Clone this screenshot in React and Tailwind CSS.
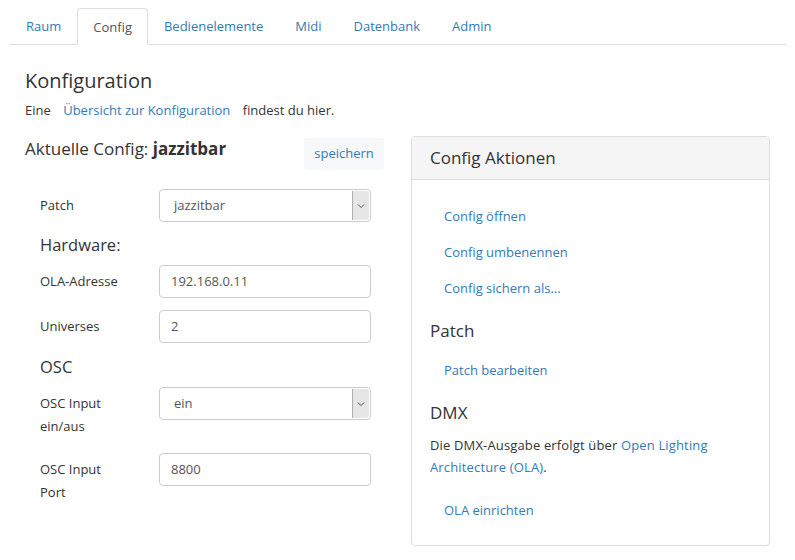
import React from "react";

const tabs = ["Raum", "Config", "Bedienelemente", "Midi", "Datenbank", "Admin"];

function Chevron() {
  return (
    <svg width="8" height="6" viewBox="0 0 8 6" fill="none">
      <path d="M1 1.5l3 3 3-3" stroke="#555" strokeWidth="1" />
    </svg>
  );
}

function SelectBox({ value }) {
  return (
    <div className="flex w-[212px] h-[33px] border border-[#ccc] rounded-[4px] bg-white overflow-hidden shrink-0">
      <div className="flex-1 flex items-center pl-[14px] text-[13px] text-[#555]">{value}</div>
      <div className="w-[17px] my-[1px] mr-[1px] bg-[#e6e6e6] border-l border-[#adadad] rounded-r-[3px] flex items-center justify-center">
        <Chevron />
      </div>
    </div>
  );
}

function TextBox({ value }) {
  return (
    <div className="flex items-center w-[212px] h-[33px] border border-[#ccc] rounded-[4px] bg-white pl-[11px] text-[13px] text-[#555] shrink-0">
      {value}
    </div>
  );
}

export default function App() {
  return (
    <div className="w-[795px] h-[560px] bg-white text-[#333] font-['Open_Sans',sans-serif] text-[13px] overflow-hidden">
      {/* Tabs */}
      <div className="pt-[8px] px-[10px]">
        <div className="flex border-b border-[#ddd] w-[776px]">
          {tabs.map((t) => (
            <div
              key={t}
              className={
                t === "Config"
                  ? "px-[15px] pt-[2px] h-[37px] flex items-center -mb-px border border-[#ddd] border-b-white rounded-t-[4px] bg-white text-[#555] text-[13px]"
                  : "px-[15px] pt-[2px] h-[36px] flex items-center border border-transparent text-[#337ab7] text-[13px]"
              }
            >
              {t}
            </div>
          ))}
        </div>
      </div>

      <div className="px-[25px]">
        <h1 className="text-[20px] leading-none mt-[26px] text-[#333]">Konfiguration</h1>
        <p className="mt-[9px] text-[13px] leading-[20px]">
          Eine <span className="text-[#337ab7] px-[9px]">Übersicht zur Konfiguration</span> findest du hier.
        </p>

        <div className="flex gap-[27px] mt-[16px]">
          {/* Left column */}
          <div className="w-[360px]">
            <div className="flex items-start justify-between">
              <div className="text-[17px] leading-[26px]">
                Aktuelle Config: <b>jazzitbar</b>
              </div>
              <div className="w-[80px] h-[32px] mt-[2px] bg-[#f6f8fa] rounded-[3px] flex items-center justify-center text-[#337ab7] text-[13px]">
                speichern
              </div>
            </div>

            <div className="pl-[15px] mt-[19px]">
              <div className="flex items-center">
                <div className="w-[119px]">Patch</div>
                <SelectBox value="jazzitbar" />
              </div>
              <div className="text-[16.5px] mt-[10px] leading-[26px]">Hardware:</div>
              <div className="flex items-center mt-[7px]">
                <div className="w-[119px]">OLA-Adresse</div>
                <TextBox value="192.168.0.11" />
              </div>
              <div className="flex items-center mt-[12px]">
                <div className="w-[119px]">Universes</div>
                <TextBox value="2" />
              </div>
              <div className="text-[16.5px] mt-[11px] leading-[26px]">OSC</div>
              <div className="flex items-start mt-[7px]">
                <div className="w-[119px] leading-[23px] pt-[5px]">
                  OSC Input
                  <br />
                  ein/aus
                </div>
                <SelectBox value="ein" />
              </div>
              <div className="flex items-start mt-[15px]">
                <div className="w-[119px] leading-[23px] pt-[5px]">
                  OSC Input
                  <br />
                  Port
                </div>
                <TextBox value="8800" />
              </div>
            </div>
          </div>

          {/* Right card */}
          <div className="w-[360px] h-[410px] border border-[#ddd] rounded-[4px] overflow-hidden">
            <div className="h-[43px] bg-[#f5f5f5] border-b border-[#ddd] flex items-center px-[18px] text-[17px]">
              Config Aktionen
            </div>
            <div className="px-[18px]">
              <div className="pl-[14px] pt-[26px] flex flex-col gap-[16px] text-[#337ab7] leading-[20px]">
                <div>Config öffnen</div>
                <div>Config umbenennen</div>
                <div>Config sichern als...</div>
              </div>
              <div className="text-[17px] mt-[21px] leading-[24px]">Patch</div>
              <div className="pl-[14px] mt-[17px] text-[#337ab7] leading-[20px]">Patch bearbeiten</div>
              <div className="text-[17px] mt-[21px] leading-[24px]">DMX</div>
              <div className="mt-[9px] leading-[22px] tracking-[0.15px]">
                <div>
                  Die DMX-Ausgabe erfolgt über <span className="text-[#337ab7]">Open Lighting</span>
                </div>
                <div>
                  <span className="text-[#337ab7]">Architecture (OLA)</span>.
                </div>
              </div>
              <div className="pl-[14px] mt-[22px] text-[#337ab7] leading-[20px]">OLA einrichten</div>
            </div>
          </div>
        </div>
      </div>
    </div>
  );
}
